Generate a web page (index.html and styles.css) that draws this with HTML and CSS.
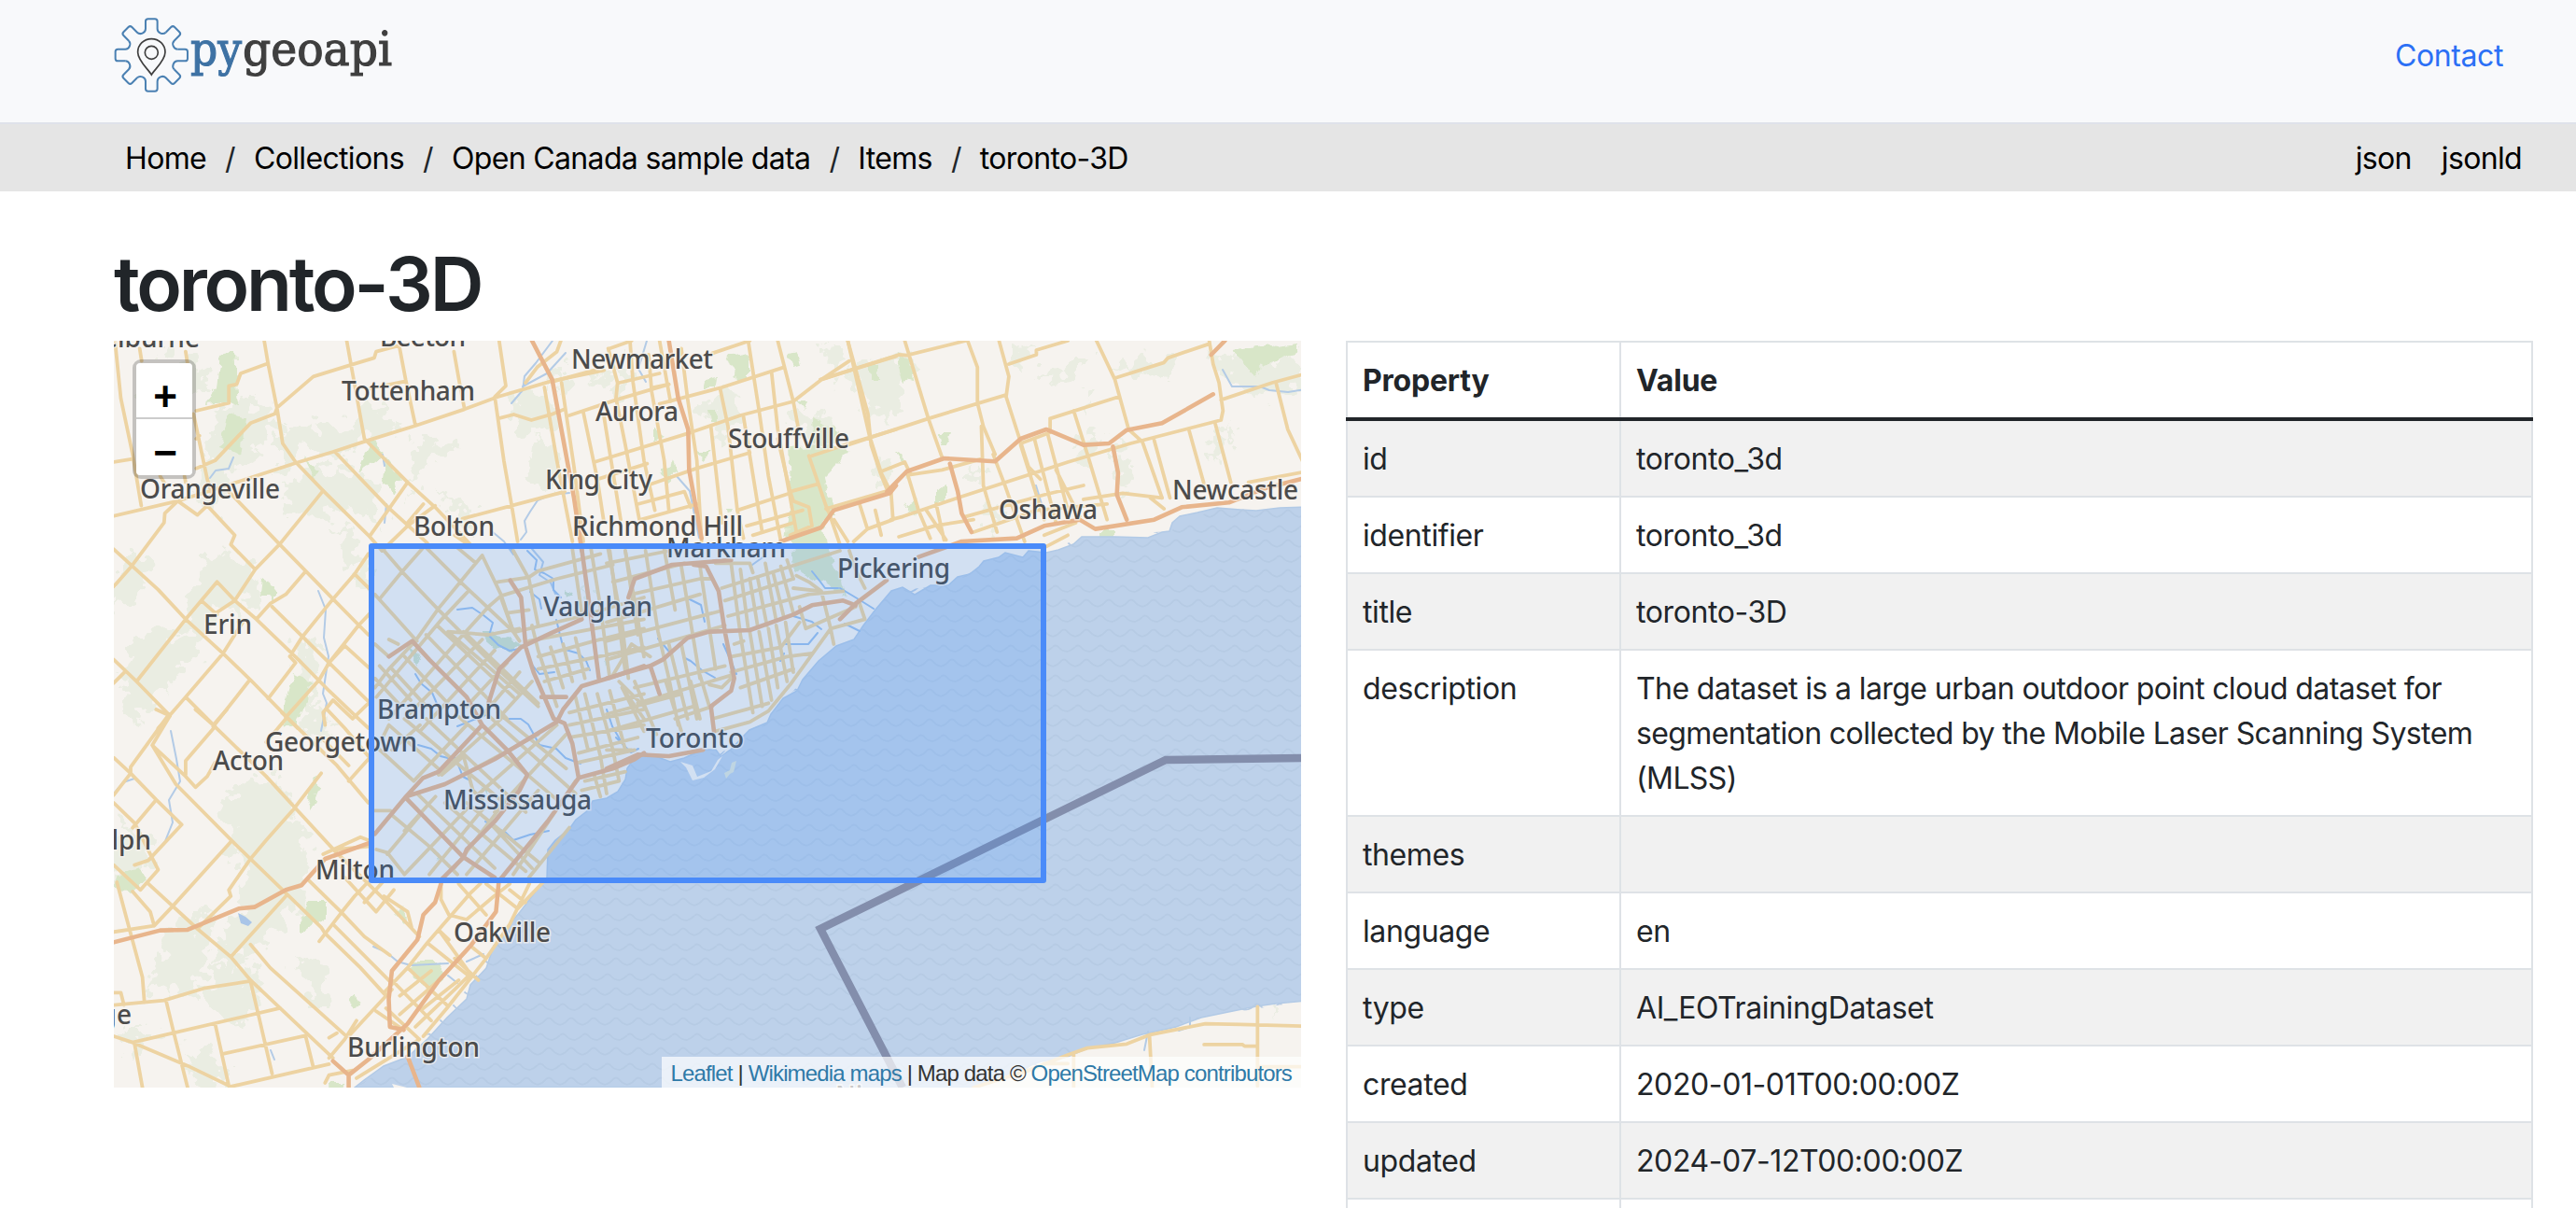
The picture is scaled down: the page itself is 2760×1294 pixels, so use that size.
FILE: index.html
```html
<!DOCTYPE html>
<html lang="en">
<head>
<meta charset="utf-8">
<title>toronto-3D</title>
<link rel="stylesheet" href="styles.css">
</head>
<body>
<header class="topbar">
  <a class="brand" href="#" aria-label="pygeoapi">
    <svg class="logo" width="300" height="84" viewBox="122 18 300 84">
      <defs>
        <path id="tooth" d="M-19-84V-108Q-19-116-11-116H11Q19-116 19-108V-84C19-71 37-64 46-73"/>
      </defs>
      <g transform="translate(162.3 59) scale(.3333)" fill="none" stroke-width="6">
        <g stroke="#4a80b2">
          <use href="#tooth"/><use href="#tooth" transform="rotate(45)"/><use href="#tooth" transform="rotate(90)"/><use href="#tooth" transform="rotate(135)"/>
          <use href="#tooth" transform="rotate(180)"/><use href="#tooth" transform="rotate(225)"/><use href="#tooth" transform="rotate(270)"/><use href="#tooth" transform="rotate(315)"/>
        </g>
        <g stroke="#3f3f3f" stroke-width="5">
          <path d="M0 63C-10 46-44 18-44-9C-44-34-24-52 0-52S44-34 44-9C44 18 10 46 0 63Z"/>
          <circle cy="-8" r="21"/>
        </g>
      </g>
      <text class="wordmark" y="70.3"><tspan class="py" x="204" textLength="55" lengthAdjust="spacingAndGlyphs">py</tspan><tspan class="geoapi" x="260" textLength="160" lengthAdjust="spacingAndGlyphs">geoapi</tspan></text>
    </svg>
  </a>
  <a class="contact" href="#">Contact</a>
</header>
<nav class="crumbs">
  <div class="trail"><a href="#">Home</a><i>/</i><a href="#">Collections</a><i>/</i><a href="#">Open Canada sample data</a><i>/</i><a href="#">Items</a><i>/</i><a href="#">toronto-3D</a></div>
  <div class="formats"><a href="#">json</a><a href="#">jsonld</a></div>
</nav>
<main>
  <h1><span>toronto-3D</span></h1>
  <div class="columns">
    <section class="map">
      <svg class="tiles" width="1272" height="800" viewBox="122 365 1272 800">
        <defs>
          <pattern id="waves" width="24" height="32" patternUnits="userSpaceOnUse">
            <path d="M0 10Q6 8 9 4Q12 1 15 4Q18 8 24 10M0 21Q3 18 6 21Q10 26 16 26Q20 25 24 21" fill="none" stroke="#b6cbe4" stroke-width="1.8"/>
          </pattern>
          <filter id="rough" x="-5%" y="-5%" width="110%" height="110%">
            <feTurbulence type="fractalNoise" baseFrequency=".06" numOctaves="3" seed="4"/>
            <feDisplacementMap in="SourceGraphic" scale="46" xChannelSelector="R" yChannelSelector="G"/>
          </filter>
          <filter id="ragged" x="-5%" y="-5%" width="110%" height="110%">
            <feTurbulence type="fractalNoise" baseFrequency=".09" numOctaves="2" seed="9"/>
            <feDisplacementMap in="SourceGraphic" scale="12" xChannelSelector="R" yChannelSelector="G"/>
          </filter>
        </defs>
        <rect x="122" y="365" width="1272" height="800" fill="#f6f3ef"/>

        <g class="wood" filter="url(#rough)">
          <path d="M170 380l40 5 20 30-40 10-20 40-20-20zM235 440l40-15 25 40-40 25-30 60-20-30zM300 450l60 10 50-30 10 30-60 30-30-10-30 25zM300 520l60-25 40 20 10 50-40-20-50 10zM355 560l30 20 20 60-20-10zM450 470l40 10-30 15-25 35zM465 520l50 40-10 15zM225 590l50 20-10 50-30-10-30 60-20 10 20-80zM130 600l35 0-20 40-30 10zM140 690l40-20 20 40-50 60-20-10zM320 680l25 10-10 60 20 30-30 15zM240 850l60-20 30 80-20 60-60-50zM280 910l40-10 10 40-20 40-60 60-20-20zM130 880l40 20-20 40-30 0zM180 990l50-10-20 90-50-10zM230 1030l50 10-20 60-40-20zM320 1020l25 10 10 50-20 0zM130 1100l30 0-20 40zM200 1120l40 20 0 25-30-5zM545 425l45-5 10 35-45 10zM575 470l20 10-5 50-25-10zM625 400l30-5-10 20zM660 375l20 20-20 40zM750 430l40-10 10 40-30 10zM840 450l40-10 20 20-30 15zM900 400l60-25 20 20-30 60-20-20zM880 375l30 0-10 20zM1085 370l20 10-20 20zM1135 390l30-5-10 20-40 5zM1200 390l50-5 10 20-40 5zM1160 420l12 0-5 20zM1045 550l30-10-10 30zM1060 600l10 0zM1190 470l20 20-5 40-10-10zM1300 470l20-15-15 40zM1290 375l100 10 10 30-60 15zM1150 475l30-10-15 40zM1030 510l20-10 0 20zM940 500l10-10 10 30-20 0zM1365 1065l10 0-5 30zM1370 1120l20 0zM620 640l10-10 0 20zM590 395l20 0-15 30zM1365 1090l5 5z"/>
        </g>
        <g class="park" filter="url(#ragged)">
          <path d="M236 380l16-4 4 60-10-5-28 2 14-16zM245 443l18 5-5 40-10-5-12-5zM325 490l16 15-5 8zM397 470l14 15-15 12-12 8zM412 490l18 25-10 14-10-14zM280 620l14 12 0 16 12 25zM282 620l12 6-4 12-10 0zM315 720l20 10-18 50-15-5 5-25zM340 830l3 15-10 25-4-15zM132 935l16-6 8 14-16 14-18-8zM330 965l20 0 0 16-28 20 0-12zM430 970l8 14-5 6-10-10zM445 1030l25 0 10 15-20 18-25-25zM378 1065l8 10-10 5zM350 1160l18 0 3 10-20 0z"/>
          <path d="M845 480l48-4 18 8-28 28 10 40-12 8 8 35 20 45-25-15-32-15-2-25-8-10 6-40zM870 450l30 12-8 14-20 0zM780 382l22-4-2 20-12 6zM845 380l8-2 4 14-6 2zM755 408l14-3-2 12-14 0zM785 385l17 0 0 18-12 2zM931 390l10 0 0 14-8 0zM959 378l16 6 5 20-12 8-4-14zM855 430l10 0-3 8zM758 440l10-1 0 14-8 0zM1006 465l12 0-4 12-6 0zM970 540l10-5 6 10-10 8zM1003 525l10-5 0 18-10 0zM960 485l8 4-3 7zM1320 375l72-8 0 10-40 14-8 12zM748 485l16 0-10 8zM700 460l12 8-12 4zM708 505l14-12 4 12-12 10zM777 545l8 0-2 6zM1180 568l12 0 0 12-12-2z"/>
          <path d="M515 675l10 0 10 10 14-5 8 12-10 6-22-5zM438 694l8 5 6 12-6 2zM462 910l8 8-2 4zM515 843l8 4-2 6zM647 709l4 4-3 2zM605 632l6 4-4 4z" fill="#cfe0c8"/>
        </g>

        <path d="M1400 543L1371 544L1346 547L1329 546L1304 544L1283 549L1264 553L1256 560L1253 569L1245 570L1230 576L1195 575L1159 575L1150 583L1134 589L1121 592L1102 590L1096 597L1077 592L1070 597L1054 601L1049 607L1039 615L1026 618L1016 627L997 627L980 637L967 629L955 633L938 653L925 670L915 685L896 692L877 708L860 728L854 740L839 748L826 765L822 774L803 782L797 788L783 803L772 810L767 803L753 803L733 812L718 816L705 811L692 807L680 812L672 823L670 835L662 848L650 855L635 858L630 868L617 878L610 888L595 900L587 910L586 940L580 947L557 977L546 990L529 1013L521 1037L504 1055L500 1070L479 1090L458 1113L437 1132L411 1142L390 1157L380 1165H1043L1089 1147L1115 1137L1144 1132L1165 1123L1195 1117L1224 1108L1260 1100L1287 1090L1321 1083L1346 1078L1367 1075L1400 1072Z" fill="#bdd1ea" stroke="#b2cae6" stroke-width="1.5"/>
        <path d="M1400 543L1304 544L1253 569L1159 575L1121 592L1077 592L1016 627L955 633L915 685L860 728L822 774L783 803L733 812L680 812L662 848L610 888L586 940L529 1013L504 1055L437 1132L380 1165H1043L1165 1123L1287 1090L1400 1072Z" fill="url(#waves)"/>
        <path d="M729 816l13 4 5 12 15-6 7-12 5-4-8 14-12 9-12 3-7-14zM772 810l10-8 2-6zM420 1161l16 4h-14z" fill="#f6f3ef"/>
        <path d="M776 828l6-3 2-8 5-2-3 12-4 2-4 5z" fill="#dfe6dc"/>
        <path d="M255 978l8 4 7 6-4 4-8-3z" fill="#a9c5e8"/>

        <g class="river">
          <path d="M250 490l-5 12-14 2-6 8M592 365l-18 24-12 14-2 15-12 14M606 378l-20 22-26 14M693 365l-6 20-3 10 8 14M610 528l-20 2-14 6-8 12-6 10 2 12-6 8M528 570l12 10 10 14M570 588l12 14-4 14 12 8 5 12M341 633l8 20-2 30 5 20-6 40 4 10-6 30M183 783l6 30 4 24-12 20 4 24-8 20-16 20M122 850l10-12 12-4M725 510l14 16 6 30 4 20M412 560l2-20M410 487l2 12M400 1014l14 6 12 10 14 4 40-2M1310 396l10 18 30 0 10 4 20 2 18-3M1110 520l6 20M1275 1090l0 10-12 4M1230 1105l-4 20M290 1125l4 10M500 1030l18-8M480 1045l10 8M820 595l-14 10"/>
        </g>
        <g class="river strong">
          <path d="M490 653l16-2 12 8 10 8-4 14 10 10 12 6 10-2M548 588l6 10M565 590l10 10-2 10 10 4 10 6 0 12 8 8M568 634l10 8 2 10M596 664l6 24 4 8 14 4 8 8 4 10M570 712l8 10 16-2M445 722l6 10 12 10 6 14M448 798l14 4 10 8 8 2 8 0 4 10 4 10 8 4M540 770l18 0 8 6 12 22 18 4 10 10 16 6M490 778l30-12M520 880l10 6 12 6 8 8 18-6 20-4M735 640l16 8 4 18M705 684l12 14M732 704l8 4 12 10 14 8M775 690l8 18 6 14M870 612l8 10 6 8 14 0M850 660l20 6 10 8M840 700l-4 8M900 630l20 12 16 10M650 760l6 18 14 24M660 790l16 16 8-4M842 690l24 0 10-12M905 668l16 8"/>
        </g>

        <g class="road">
          <g transform="translate(100 360) scale(.4209 .3333)">
            <path d="M55 15L70 200L100 380L122 545M118 40L123 80M52 578L215 530L340 480L515 408L610 372L700 335L820 288L945 235L1030 195L1165 145L1300 110M235 50L240 90M255 250L290 460L300 500M170 450L180 470M232 450L235 470M435 15L445 90L468 235L482 345L515 405L585 497L700 640L735 690M440 90L375 120L365 155L345 160L345 215L262 240M262 425L310 400L400 280L462 250L468 230L560 130L650 95L715 70L720 50L780 30M645 15L660 120L690 330L800 470L870 550L960 670M615 372L750 550L850 665M780 40L795 140L820 288M795 145L700 170M918 50L932 150L945 235M1033 15L1050 160L1022 195L1045 400L1065 545L1080 660M1100 150L1130 100L1180 50L1190 15M1030 265L1070 252L1115 270L1170 250L1200 235M940 587L1065 545L1200 500M52 405L100 395M262 330L270 320"/>
            <path d="M52 685L165 815L235 910L330 1020L400 1105L520 1260M52 805L97 740L180 600L182 570L215 530L265 575L290 545L360 640L350 670L412 750M345 500L475 670L610 845L700 960M585 497L475 668L412 750L360 850L300 900M315 790L360 850L415 910L530 1050L600 1140L700 1260M315 790L275 850L235 910L110 1110L52 1040M275 850L315 895M110 1110L195 1220L165 1260M52 1115L80 1080M415 910L450 860L490 830L540 757M380 920L330 1020L235 1160L310 1255M395 1110L305 1255M235 1160L180 1240M700 700L665 765L610 845L530 970L500 1030L515 1050L445 1165M705 890L675 930L600 1050L575 1105L490 1225M455 870L600 1050L705 1180M665 765L705 815M705 640L750 560L800 470M735 690L800 610L870 545M840 540L800 600M640 995L705 1070M640 995L600 1050M610 1170L585 1210L590 1250M610 1170L660 1230L700 1180M920 640L955 670"/>
          </g>
          <g transform="translate(560 360) scale(.3333)">
            <path d="M70 165L110 400L160 660M125 150L165 420L195 660M195 245L240 460L260 590M260 250L315 590M300 200L330 350L375 590M345 15L355 150L390 400L425 560M275 40L305 150L300 200M405 60L415 180L455 400L470 560M440 15L475 210M510 40L530 200L560 400L575 660M725 15L760 240L790 450L830 660M800 115L820 300L880 630M820 15L870 210L885 290M635 170L660 290L690 560L710 650M605 290L640 600M710 260L770 630M1045 15L1110 250L1120 350L1150 440L1170 490"/>
            <path d="M150 255L300 205L470 155M100 145L230 110M440 218L640 165L840 100M230 405L540 310L700 255L870 210L960 140L1050 80M960 140L1070 105L1200 65M400 480L560 425L730 375M240 460L400 410M370 540L520 500L540 550M380 590L560 540M610 55L730 15M280 40L350 15M310 150L440 120M420 165L470 155M930 385L1050 345L1200 300M860 500L950 475M920 385L980 560M820 330L860 500L870 530L920 550L930 610L860 640M690 560L860 505M720 610L900 560M740 640L870 600M975 555L1180 495"/>
          </g>
          <g transform="translate(740 360) scale(.4209 .3333)">
            <path d="M350 560L380 670M400 15L455 320L485 440L505 490M545 15L605 265L640 390M705 15L730 100L730 215L745 290L775 380M785 15L810 130L803 195L860 420L890 460M330 140L530 60L550 62L700 15M400 350L605 265L735 215L800 190M810 90L880 60L880 45L960 15M1033 15L1080 140L1115 300L1150 340L1200 520M1080 135L1205 85L1215 70L1320 25M1320 15L1330 90L1345 150L1355 240L1350 270L1120 345L960 405L680 520M1350 205L1480 150L1568 120M1490 150L1520 300L1568 430M1335 280L1375 470M915 265L1090 195M915 265L915 310L840 345M975 240L1010 380L1060 590M1268 300L1310 490M1180 335L1220 520"/>
            <path d="M550 435L580 560L610 650M485 435L545 405L560 445L640 430L740 395M770 380L800 480L850 660M740 290L745 480L780 630M840 350L900 590M875 330L930 600M910 320L960 560M930 430L990 580M700 580L900 510L1000 480M720 630L880 560L1060 540M1000 525L1100 505L1200 520M510 500L515 590L450 620L415 660M365 590L400 660M470 560L485 640M530 645L620 610L720 590M430 540L450 620M600 560L650 655M540 580L680 520M1420 470L1568 435M900 640L980 600M960 640L900 680M510 590L540 580M625 540L645 655M1170 520L1205 555"/>
          </g>
          <g transform="translate(100 760) scale(.4209 .3333)">
            <path d="M52 155L95 205L160 290L225 370L140 485L105 500M190 20L95 185L95 205L52 275M160 0L195 20L150 115L210 240L355 425L490 590L580 700L590 720L680 830L745 920M150 115L235 215L260 250L290 215L310 170M310 55L235 165L235 210M260 0L305 50L440 215L520 325L615 455M305 50L340 0M490 30L440 105M480 10L620 180L700 300M580 205L510 320L440 420L400 480L345 580L350 600L265 705M350 425L200 635L155 695M160 290L100 380M52 300L105 365L165 515L120 580L52 500M60 555L95 720L125 860L130 940M100 585L145 650L155 695L52 715M140 560L265 705L350 795L400 870L610 1120M350 795L490 600M400 755L450 830L640 1045"/>
            <path d="M52 950L180 935L285 895L400 873L420 980L455 1170M185 935L205 1040L240 1215M52 1050L100 1070L240 1145L350 1212L600 1140M100 1070L475 960M105 1075L125 1215M310 1010L345 1210M330 1107L540 1048L560 1150M52 910L70 910L78 950M545 545L630 650L690 730L755 790M610 690L760 880M630 655L575 745M665 600L630 655M585 465L680 410L700 420M615 455L740 610L830 730M640 540L720 650L765 580M665 600L710 540M690 620L740 550M740 600L800 650L810 700M620 450L700 440M650 230L700 160M580 90L650 180M595 0L640 60L700 150"/>
            <path d="M850 750L960 590L985 560M880 710L905 740M885 560L885 610L905 660L950 675L1020 600L1060 560M930 560L1000 660M1000 560L1080 640M1110 560L1060 690L1000 800L900 960L840 1050M1060 580L1100 620M1145 555L1080 640M760 870L860 1000M800 830L900 950M850 750L960 860M740 910L800 830L850 750M780 920L860 840M745 960L830 1060M650 1050L760 900M720 970L790 1030M600 1120L640 1060L670 1000M670 1185L830 1060M600 1055L620 1040M590 1200L600 1175L660 1160M780 980L880 870M820 1020L920 900L960 850M880 710L960 850M920 800L980 870M960 760L1000 800M840 960L930 870"/>
          </g>
          <g transform="translate(740 760) scale(.4209 .3333)">
            <path d="M720 1215L860 1160L960 1110L1010 1088L1110 1075L1170 1045L1310 1010L1400 1012L1568 1018M1443 955V1210M1168 1050L1175 1215M1307 1077L1405 1077L1410 1082H1443M975 1110V1215M1443 1148H1568M900 1138H960"/>
          </g>
          <g transform="translate(390 570) scale(.3333)">
            <path d="M60 55L125 130L240 250L430 440L560 560M200 50L310 160L480 320M300 50L360 100M35 200L170 350M35 360L80 400M190 50L120 130L50 215M380 75L310 160L240 245L165 350L80 440L35 500M335 190L250 280L40 530M440 205L400 240L300 350L80 600M380 75L440 200L480 320L500 350M430 160L530 145L560 125L760 70M440 205L620 150L800 105M490 320L700 270L900 210M530 350L900 280M235 300L480 530M200 330L460 600M50 430L150 540M130 400L260 540M90 440L200 560M270 320L500 520M320 320L560 550M380 345L140 590M420 380L180 640M460 420L330 560M500 450L380 590M540 480L440 590M270 320L400 330L500 310M35 470L110 550M80 345L110 360"/>
            <path d="M40 690L160 800M80 620L250 770M130 600L450 870M200 600L520 900M300 590L620 860M400 590L680 840M430 580L650 760M160 800L330 620M240 780L440 600M300 790L560 650M370 840L620 620M420 900L650 650M90 910L210 1010L300 1100M170 840L420 1080M260 870L520 1090M330 870L560 1060M400 930L540 1080M130 1100L340 880M210 1100L390 880M290 1080L450 870M330 1100L560 830M480 1100L680 800M530 1110L660 950M130 960L230 850M35 895L85 895M40 1020L75 1030L130 1100M75 1035L180 910M250 780L320 720L350 830L380 860M80 620L60 660M90 700L180 620"/>
            <path d="M670 55L700 260M730 55L760 240L790 470M785 55L830 300L850 470M840 60L870 220L900 400M480 60L530 150L560 300M560 380L620 560M600 370L640 500M640 360L670 480M680 340L710 470M540 300L560 380M560 400L740 350L900 310M560 440L900 370M580 480L720 440M660 580L900 520M660 620L900 570M660 660L900 620M690 710L880 660M690 740L870 700M710 800L840 770M700 830L820 800M680 530L720 700M710 520L760 720L780 840M750 520L800 700L820 800M790 510L840 700M830 500L900 600M740 780L760 850M820 480L900 560M440 210L480 320M460 260L530 250"/>
          </g>
          <g transform="translate(650 570) scale(.3333)">
            <path d="M10 60L60 450M60 60L100 330M125 60L165 320L200 470L230 620M185 55L220 250M240 110L300 470M300 110L350 440M400 100L430 330M430 120L455 310M460 150L485 300M485 145L515 300M510 100L545 285M535 130L570 275M560 110L600 260M580 90L600 150M430 330L470 580M460 320L500 560M490 320L530 540M520 310L550 500M545 300L580 480M575 290L600 450M240 360L290 600M200 360L260 600M270 480L300 600M300 460L330 560M190 480L240 640M50 500L120 640M90 480L160 650"/>
            <path d="M0 100L200 60M20 160L250 100M80 200L300 150L340 150M0 290L300 200M0 350L360 255M0 410L380 300M380 220L600 150M370 180L750 60M390 270L650 200L760 190M400 400L560 370L620 290M400 450L580 400L660 390M100 550L400 460M0 640L280 560M340 600L520 550M90 500L380 430M350 640L460 610M0 585L240 520M220 600L340 560M20 460L80 360L140 400M460 610L520 575L590 490L720 310L830 280L810 220M430 500L600 440M610 140L650 160L690 190L720 310L730 360M620 240L640 310M780 60L800 120L830 180M600 180L690 190M640 310L800 240M350 100L460 100L470 130M0 700L80 700M330 490L370 500L400 470M410 360L440 350"/>
          </g>
        </g>

        <g class="motorway">
          <path transform="translate(560 360) scale(.3333)" d="M30 15L95 140L130 330L165 520L190 690M470 15L500 200L532 300L535 430L575 650M830 660L960 615L1000 560L1180 505L1200 480"/>
          <path transform="translate(740 360) scale(.4209 .3333)" d="M500 500L550 435L645 393L775 403L840 330L905 300L1000 350L1065 345L1110 302L1200 280L1330 187M660 410L680 500L690 570L715 630M1075 355L1088 440L1085 510L1110 590M580 710L690 660L830 650L900 610L990 590L1030 620L1180 590L1250 550L1370 535L1460 490L1568 455M1325 60L1360 15"/>
          <path transform="translate(100 760) scale(.4209 .3333)" d="M52 748L170 710L240 708L370 640L410 635L490 580L530 565L590 480L700 430M885 560L870 620L840 660L825 740L760 840L752 930L755 1020L790 1030M1032 555L1025 650L960 760L880 870L800 1010L700 1125L650 1175L610 1130M650 1175L650 1215M800 1115L830 1215"/>
          <path transform="translate(390 570) scale(.3333)" d="M80 400L155 350L210 410L330 530L380 620L460 700L525 780L500 830L420 930L330 1020L320 1045L245 1120M470 155L505 210L520 370L545 450L610 600M505 370L435 440L400 550M505 370L600 325L700 280M700 55L720 200L755 470M610 600L645 615L670 680L690 790M35 970L135 850L260 810L420 730L620 610L640 570L700 495L800 465L900 430M135 850L190 790L240 770L380 620M135 855L320 1045L420 1110M435 1120L590 930L690 790L800 760L870 730L900 710M570 530L650 530"/>
          <path transform="translate(650 570) scale(.3333)" d="M0 470L140 430L180 410L260 340L330 320L460 315L600 265L660 235L760 220L800 235M280 105L320 110L360 190L380 320L410 470L400 510L335 560L345 640M140 430L170 520M70 210L90 150L210 105L400 90M750 280L800 230L900 155M0 760L100 715L200 720L310 700"/>
        </g>

        <path d="M1400 812L1249 814L879 995L967 1165" fill="none" stroke="#838eac" stroke-width="8.5"/>

        <g class="places">
          <text x="214" y="372.3" text-anchor="end">Shelburne</text>
          <text x="407" y="370.7" textLength="92">Beeton</text>
          <text x="612" y="394.5" textLength="152">Newmarket</text>
          <text x="366" y="429.3" textLength="143">Tottenham</text>
          <text x="638" y="450.7" textLength="89">Aurora</text>
          <text x="780" y="480.3" textLength="130">Stouffville</text>
          <text x="584" y="524.3" textLength="115">King City</text>
          <text x="150" y="534.3" textLength="150">Orangeville</text>
          <text x="443" y="573.7" textLength="87">Bolton</text>
          <text x="613" y="573.7" textLength="183">Richmond Hill</text>
          <text x="714" y="597" textLength="128">Markham</text>
          <text x="897" y="618.7" textLength="121">Pickering</text>
          <text x="1070" y="555.7" textLength="106">Oshawa</text>
          <text x="1256" y="535" textLength="135">Newcastle</text>
          <text x="582" y="660.3" textLength="117">Vaughan</text>
          <text x="218" y="678.7" textLength="52">Erin</text>
          <text x="404" y="770" textLength="133">Brampton</text>
          <text x="284" y="805" textLength="163">Georgetown</text>
          <text x="228" y="824.7" textLength="76">Acton</text>
          <text x="692" y="801" textLength="105">Toronto</text>
          <text x="475" y="866.7" textLength="159">Mississauga</text>
          <text x="162" y="910.3" text-anchor="end">Guelph</text>
          <text x="338" y="942.3" textLength="85">Milton</text>
          <text x="486" y="1008.7" textLength="104">Oakville</text>
          <text x="141" y="1096.7" text-anchor="end">Cambridge</text>
          <text x="372" y="1132" textLength="142">Burlington</text>
          <text x="895" y="1184">Niagara</text>
        </g>
        <rect x="398" y="585" width="720" height="358" fill="#3388ff" fill-opacity=".18" stroke="#4a8bf9" stroke-width="6" stroke-linejoin="round"/>
      </svg>
      <div class="zoom"><a href="#">+</a><a href="#">−</a></div>
      <div class="credit"><a href="#">Leaflet</a> | <a href="#">Wikimedia maps</a> | Map data © <a href="#">OpenStreetMap contributors</a></div>
    </section>
    <table class="props">
      <thead><tr><th class="key">Property</th><th>Value</th></tr></thead>
      <tbody>
        <tr><td>id</td><td>toronto_3d</td></tr>
        <tr><td>identifier</td><td>toronto_3d</td></tr>
        <tr><td>title</td><td>toronto-3D</td></tr>
        <tr><td>description</td><td class="prose">The dataset is a large urban outdoor point cloud dataset for segmentation collected by the Mobile Laser Scanning System (MLSS)</td></tr>
        <tr><td>themes</td><td></td></tr>
        <tr><td>language</td><td>en</td></tr>
        <tr><td>type</td><td>AI_EOTrainingDataset</td></tr>
        <tr><td>created</td><td>2020-01-01T00:00:00Z</td></tr>
        <tr><td>updated</td><td>2024-07-12T00:00:00Z</td></tr>
        <tr><td></td><td></td></tr>
      </tbody>
    </table>
  </div>
</main>
</body>
</html>
```
FILE: styles.css
```css
* { box-sizing: border-box; }
html, body { margin: 0; height: 1294px; overflow: hidden; }
body {
  background: #fff;
  color: #212529;
  font: 430 32px/48px Inter, "Liberation Sans", sans-serif;
  letter-spacing: -0.4px;
}
a { text-decoration: none; color: inherit; }

.topbar {
  display: flex;
  justify-content: space-between;
  height: 133px;
  padding: 18px 78px 0 122px;
  background: #f8f9fb;
  border-bottom: 2px solid #dfe2ea;
}
.logo { display: block; }
.wordmark { font: 51px "DejaVu Serif", serif; letter-spacing: 0; stroke-width: 1.2px; }
.wordmark .py { fill: #3e72a4; stroke: #3e72a4; }
.wordmark .geoapi { fill: #3f3f3f; stroke: #3f3f3f; }
.contact { margin-top: 18px; color: #2b70f5; }

.crumbs {
  display: flex;
  justify-content: space-between;
  height: 72px;
  padding: 13px 58px 0 134px;
  background: #e5e5e5;
  color: #000;
  letter-spacing: -0.65px;
}
.trail { display: flex; gap: 20px; }
.trail i { font-style: normal; color: #212529; }
.formats { display: flex; gap: 32px; }

main { padding: 51px 46px 0 122px; }
h1 { margin: 0 0 13px; font-size: 80px; font-weight: 560; line-height: 96px; letter-spacing: -3.2px; }
.columns { display: flex; gap: 48px; align-items: flex-start; }

.map { position: relative; width: 1272px; height: 800px; overflow: hidden; }
.tiles { display: block; letter-spacing: 0; }
.road path, .motorway path, .river path { fill: none; stroke-linejoin: round; stroke-linecap: round; vector-effect: non-scaling-stroke; }
.road path { stroke: #edd3a2; stroke-width: 3.8px; }
.motorway path { stroke: #e8b58c; stroke-width: 4.6px; }
.river path { stroke: #b3cbe6; stroke-width: 2px; }
.river.strong path { stroke: #9dc0ea; }
.wood { fill: #eaede2; }
.park { fill: #d8e6c8; }
.places text {
  font: 500 28px "Noto Sans", sans-serif;
  fill: #4b4b4b;
  stroke: #f6f3ef;
  stroke-opacity: .75;
  stroke-width: 3px;
  paint-order: stroke;
}
.zoom {
  position: absolute;
  left: 20px;
  top: 20px;
  width: 68px;
  height: 128px;
  border: 4px solid rgba(0, 0, 0, .2);
  border-radius: 9px;
  background-clip: padding-box;
}
.zoom a {
  display: block;
  height: 60px;
  padding-left: 2px;
  background: #fff;
  color: #000;
  font: 700 44px/71px "Liberation Sans", sans-serif;
  text-align: center;
}
.zoom a:first-child { border-bottom: 2px solid #ccc; border-radius: 4px 4px 0 0; }
.zoom a:last-child { border-radius: 0 0 4px 4px; }
.credit {
  position: absolute;
  right: 0;
  bottom: 0;
  height: 33px;
  padding: 0 10px;
  background: rgba(255, 255, 255, .7);
  color: #333;
  font: 24px/35px "Liberation Sans", sans-serif;
  letter-spacing: -0.85px;
}
.credit a { color: #2f7aa8; }

.props {
  width: 1272px;
  table-layout: fixed;
  border-collapse: separate;
  border-spacing: 0;
}
.props th, .props td {
  height: 82px;
  padding: 17px 16px 15px;
  border: solid #dee2e6;
  border-width: 0 2px 2px 0;
  text-align: left;
  vertical-align: top;
}
.props td:first-child { border-left-width: 2px; }
.props th {
  height: 86px;
  padding: 17px 18px 19px 16px;
  border-width: 2px 0 0;
  font-weight: 700;
  letter-spacing: -0.2px;
  background:
    linear-gradient(#212529, #212529) left bottom / 100% 4px no-repeat,
    linear-gradient(#dee2e6, #dee2e6) right top / 2px 100% no-repeat;
}
.props .key {
  width: 295px;
  padding-left: 18px;
  background:
    linear-gradient(#212529, #212529) left bottom / 100% 4px no-repeat,
    linear-gradient(#dee2e6, #dee2e6) right top / 2px 100% no-repeat,
    linear-gradient(#dee2e6, #dee2e6) left top / 2px 100% no-repeat;
}
.props .prose { letter-spacing: -0.6px; }
.props tbody tr:nth-child(odd) td { background: #f1f1f1; }
```
